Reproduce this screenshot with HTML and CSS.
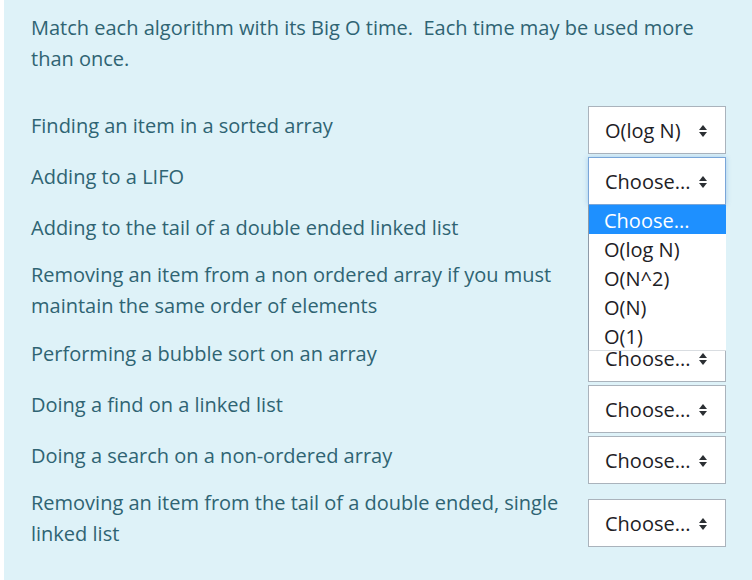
FILE: index.html
```html
<!DOCTYPE html>
<html lang="en">
<head>
<meta charset="utf-8">
<title>Match question</title>
<link rel="stylesheet" href="styles.css">
</head>
<body>
<div class="formulation">
  <p class="qtext">Match each algorithm with its Big O time.&nbsp; Each time may be used more than once.</p>
  <div class="answer">
    <p class="text">Finding an item in a sorted array</p>
    <div class="control"><div class="select"><span>O(log N)</span><svg class="arrows" viewBox="0 0 8 12" width="8" height="12"><polygon points="4,0 8,5 0,5"/><polygon points="0,7 8,7 4,12"/></svg></div></div>

    <p class="text">Adding to a LIFO</p>
    <div class="control">
      <div class="select focused"><span>Choose...</span><svg class="arrows" viewBox="0 0 8 12" width="8" height="12"><polygon points="4,0 8,5 0,5"/><polygon points="0,7 8,7 4,12"/></svg></div>
      <ul class="dropdown">
        <li class="active">Choose...</li>
        <li>O(log N)</li>
        <li>O(N^2)</li>
        <li>O(N)</li>
        <li>O(1)</li>
      </ul>
    </div>

    <p class="text">Adding to the tail of a double ended linked list</p>
    <div class="control"><div class="select"><span>Choose...</span><svg class="arrows" viewBox="0 0 8 12" width="8" height="12"><polygon points="4,0 8,5 0,5"/><polygon points="0,7 8,7 4,12"/></svg></div></div>

    <p class="text">Removing an item from a non ordered array if you must maintain the same order of elements</p>
    <div class="control"><div class="select"><span>Choose...</span><svg class="arrows" viewBox="0 0 8 12" width="8" height="12"><polygon points="4,0 8,5 0,5"/><polygon points="0,7 8,7 4,12"/></svg></div></div>

    <p class="text">Performing a bubble sort on an array</p>
    <div class="control"><div class="select"><span>Choose...</span><svg class="arrows" viewBox="0 0 8 12" width="8" height="12"><polygon points="4,0 8,5 0,5"/><polygon points="0,7 8,7 4,12"/></svg></div></div>

    <p class="text">Doing a find on a linked list</p>
    <div class="control"><div class="select"><span>Choose...</span><svg class="arrows" viewBox="0 0 8 12" width="8" height="12"><polygon points="4,0 8,5 0,5"/><polygon points="0,7 8,7 4,12"/></svg></div></div>

    <p class="text">Doing a search on a non-ordered array</p>
    <div class="control"><div class="select"><span>Choose...</span><svg class="arrows" viewBox="0 0 8 12" width="8" height="12"><polygon points="4,0 8,5 0,5"/><polygon points="0,7 8,7 4,12"/></svg></div></div>

    <p class="text">Removing an item from the tail of a double ended, single linked list</p>
    <div class="control"><div class="select"><span>Choose...</span><svg class="arrows" viewBox="0 0 8 12" width="8" height="12"><polygon points="4,0 8,5 0,5"/><polygon points="0,7 8,7 4,12"/></svg></div></div>
  </div>
</div>
</body>
</html>
```

FILE: styles.css
```css
html, body {
  margin: 0;
  padding: 0;
  background: #ffffff;
}

body {
  font-family: "Open Sans", "Noto Sans", sans-serif;
  font-size: 20px;
  line-height: 31px;
}

.formulation {
  margin-left: 4px;
  height: 580px;
  box-sizing: border-box;
  padding: 12px 26px 0 27px;
  background: #def2f8;
  color: #2f6473;
}

.qtext {
  margin: 0 0 32px 0;
}

.answer {
  display: grid;
  grid-template-columns: 1fr 138px;
  column-gap: 11px;
  row-gap: 3px;
  align-items: center;
}

.text {
  margin: 0 0 10px 0;
}

.control {
  position: relative;
}

.select {
  display: flex;
  align-items: center;
  height: 48px;
  box-sizing: border-box;
  padding: 2px 18px 0 16px;
  border: 1px solid #aab3bc;
  background: #ffffff;
  color: #1d2125;
  line-height: 30px;
}

.select.focused {
  border-color: #7aa6d8;
  box-shadow: 0 0 5px rgba(40, 120, 210, 0.3);
}

.arrows {
  margin-left: auto;
  margin-top: -1px;
  fill: #2b2f33;
  flex: none;
}

.dropdown {
  position: absolute;
  top: 100%;
  left: 0;
  right: 0;
  z-index: 5;
  margin: 0;
  padding: 0;
  list-style: none;
  background: #ffffff;
  border-left: 1px solid #8e9aa8;
  border-bottom: 1px solid #d9dde1;
  color: #1d2125;
}

.dropdown li {
  height: 29px;
  line-height: 32px;
  padding-left: 15px;
}

.dropdown li.active {
  background: #1e90ff;
  color: #ffffff;
}
```
